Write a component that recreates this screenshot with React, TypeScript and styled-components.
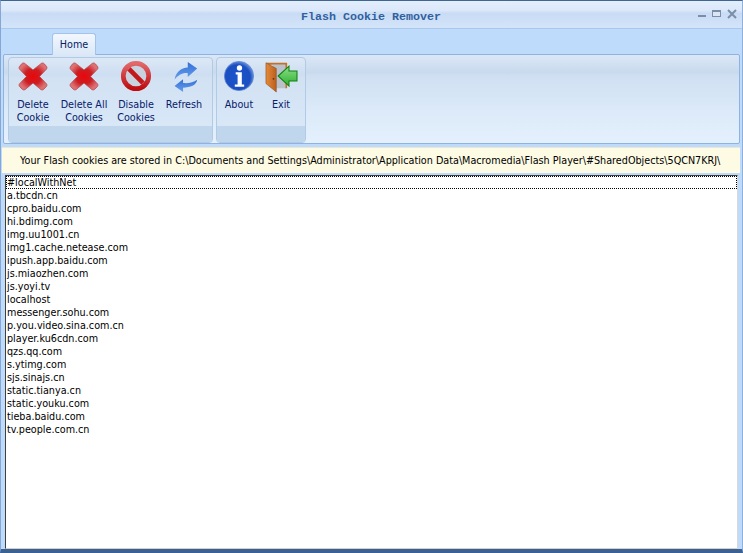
import * as React from 'react'
import styled, { createGlobalStyle } from 'styled-components'

const GlobalStyle = createGlobalStyle`
  html, body {
    margin: 0;
    padding: 0;
    background: #fff;
  }
`

const Window = styled.div`
  box-sizing: border-box;
  width: 743px;
  height: 553px;
  display: flex;
  flex-direction: column;
  background: #bfdbfb;
  border-top: 1px solid #3f6590;
  border-bottom: 4px solid #3b6092;
  border-left: 1px solid #86a6d6;
  border-right: 1px solid #8fb0d8;
  font-family: "DejaVu Sans", sans-serif;
  font-size: 9.65px;
  color: #000;
  overflow: hidden;
`

const TitleBar = styled.header`
  position: relative;
  flex: none;
  height: 27px;
  display: flex;
  align-items: center;
  justify-content: center;
  background: linear-gradient(#e3eefc 0, #dbe8fa 35%, #c9dcf5 45%, #d3e4f9 100%);
  border-bottom: 1px solid #a9c8ee;
`

const Title = styled.h1`
  margin: 0 0 0 -1px;
  padding-top: 5px;
  font-family: "Liberation Mono", monospace;
  font-size: 11.67px;
  font-weight: 700;
  color: #31609f;
`

const WindowControls = styled.div`
  position: absolute;
  top: 8px;
  right: 5px;
  display: flex;
  gap: 6px;
  svg {
    display: block;
  }
`

const TabStrip = styled.nav`
  flex: none;
  height: 25px;
  display: flex;
  align-items: flex-end;
  padding-left: 51px;
  background: #bfdbfb;
`

const Tab = styled.div`
  box-sizing: border-box;
  width: 44px;
  height: 22px;
  margin-bottom: -1px;
  display: flex;
  align-items: center;
  justify-content: center;
  position: relative;
  z-index: 1;
  color: #06206a;
  background: linear-gradient(#f2f7fe, #dbe8f7);
  border: 1px solid #a3c3ea;
  border-bottom: none;
  border-radius: 3px 3px 0 0;
`

const Ribbon = styled.section`
  box-sizing: border-box;
  flex: none;
  height: 90px;
  margin: 0 2px;
  padding: 2px 4px 0;
  display: flex;
  gap: 3px;
  background: linear-gradient(#dbe7f6 0, #c9daee 20%, #d0e0f2 24%, #dceaf9 65%, #e4f0fc 100%);
  border: 1px solid #8fb3e0;
  border-radius: 2px;
`

const Group = styled.div<{ $width: number }>`
  box-sizing: border-box;
  width: ${p => p.$width}px;
  display: flex;
  flex-direction: column;
  background: linear-gradient(#dce8f6, #cddef1 20%, #d2e2f3 24%, #dbe9f8);
  border: 1px solid #b2cae4;
  border-radius: 4px;
  overflow: hidden;
`

const GroupButtons = styled.div`
  flex: 1;
  display: flex;
`

const GroupFooter = styled.div`
  flex: none;
  height: 16px;
  background: #bfd6ec;
`

const RibbonButton = styled.button<{ $width: number }>`
  flex: none;
  width: ${p => p.$width}px;
  padding: 2px 0 0;
  display: flex;
  flex-direction: column;
  align-items: center;
  background: none;
  border: none;
  font: inherit;
  color: #06206a;
`

const IconSlot = styled.span`
  height: 36px;
  display: block;
  svg {
    display: block;
    overflow: visible;
  }
`

const ButtonLabel = styled.span`
  margin-top: 2px;
  line-height: 13px;
  text-align: center;
  white-space: pre;
`

const MessageBar = styled.div`
  flex: none;
  height: 25px;
  margin: 3px 2px 0 1px;
  padding-left: 18px;
  display: flex;
  align-items: center;
  background: #fdfbe3;
  border-top: 1px solid #e9e8d6;
  white-space: pre;
`

const CookieList = styled.ul`
  box-sizing: border-box;
  flex: none;
  height: 374px;
  margin: 2px 4px 0;
  padding: 0;
  list-style: none;
  background: #fff;
  border-top: 1px solid #404040;
  border-left: 1px solid #404040;
  border-right: 1px solid #d8d8d8;
  border-bottom: 1px solid #d4d0c8;
`

const CookieRow = styled.li<{ $focused?: boolean }>`
  box-sizing: border-box;
  height: 13px;
  padding-left: 1px;
  line-height: 13px;
  white-space: nowrap;
  outline: ${p => (p.$focused ? '1px dotted #000' : 'none')};
  outline-offset: -1px;
`

const cookies = [
  '#localWithNet',
  'a.tbcdn.cn',
  'cpro.baidu.com',
  'hi.bdimg.com',
  'img.uu1001.cn',
  'img1.cache.netease.com',
  'ipush.app.baidu.com',
  'js.miaozhen.com',
  'js.yoyi.tv',
  'localhost',
  'messenger.sohu.com',
  'p.you.video.sina.com.cn',
  'player.ku6cdn.com',
  'qzs.qq.com',
  's.ytimg.com',
  'sjs.sinajs.cn',
  'static.tianya.cn',
  'static.youku.com',
  'tieba.baidu.com',
  'tv.people.com.cn',
]

const CrossIcon = () => (
  <svg width="32" height="32" viewBox="0 0 34 34">
    <defs>
      <radialGradient id="crossFill" cx="50%" cy="50%" r="52%">
        <stop offset="0" stopColor="#ec0509" />
        <stop offset="0.55" stopColor="#cb1e23" />
        <stop offset="1" stopColor="#dc7073" />
      </radialGradient>
    </defs>
    <path
      d="M8 3.500 17 10.500 26 3.500C27 3 28 3 29 4L31.500 7C32 8 32 9 31.500 9.500L24 17.500 31.500 25.500C32 26.500 32 27.500 31 28.500L28.500 31C27.500 32 26.500 32 25.500 31.500L17 24.500 8.500 31.500C7.500 32 6.500 32 5.500 31L3 28.500C2 27.500 2 26.500 2.500 25.500L10 17.500 2.500 9.500C2 8.500 2 7.500 3 6.500L5 4C6 3 7 3 8 3.500Z"
      fill="url(#crossFill)"
      stroke="#b8484b"
      strokeWidth="0.8"
    />
  </svg>
)

const BanIcon = () => (
  <svg width="32" height="32" viewBox="0 0 34 34">
    <defs>
      <linearGradient id="banRing" x1="0" y1="0" x2="0" y2="1">
        <stop offset="0" stopColor="#e2686a" />
        <stop offset="1" stopColor="#bd0d10" />
      </linearGradient>
    </defs>
    <circle cx="17" cy="17" r="13.500" fill="#c7d3df" stroke="url(#banRing)" strokeWidth="5" />
    <path d="M9.500 9.500 24.500 24.500" stroke="#c4191c" strokeWidth="5" />
  </svg>
)

const RefreshIcon = () => (
  <svg width="32" height="32" viewBox="0 0 34 34">
    <defs>
      <linearGradient id="refreshFill" x1="0" y1="0" x2="0" y2="1">
        <stop offset="0" stopColor="#2f6fd8" />
        <stop offset="1" stopColor="#6aa0ea" />
      </linearGradient>
    </defs>
    <path
      d="M7 21C8 13 14 8.500 21 8L21 2 31 9 21 18 21 14C15 13.500 11 16 7 21Z"
      fill="url(#refreshFill)"
    />
    <path
      d="M31 21C30 27 24 29 16 29.500L16 34 7 27.500 16 20.500 16 24.500C22 25 27 24 31 21Z"
      fill="url(#refreshFill)"
    />
  </svg>
)

const InfoIcon = () => (
  <svg width="32" height="32" viewBox="0 0 34 34">
    <defs>
      <radialGradient id="infoFill" cx="45%" cy="55%" r="62%">
        <stop offset="0" stopColor="#1c55cf" />
        <stop offset="0.7" stopColor="#1b4fc0" />
        <stop offset="1" stopColor="#8fb0ea" />
      </radialGradient>
    </defs>
    <circle cx="17" cy="17" r="15.500" fill="url(#infoFill)" stroke="#5b86d2" strokeWidth="0.8" />
    <circle cx="17.500" cy="8.500" r="2.800" fill="#fff" />
    <path d="M13.500 13H20V26H22.500V28.500H12.500V26H15.500V15.500H13.500Z" fill="#fff" />
  </svg>
)

const ExitIcon = () => (
  <svg width="32" height="32" viewBox="0 0 34 34">
    <defs>
      <linearGradient id="doorFill" x1="0" y1="0" x2="1" y2="0">
        <stop offset="0" stopColor="#e58a3a" />
        <stop offset="1" stopColor="#b9601f" />
      </linearGradient>
      <linearGradient id="arrowFill" x1="0" y1="0" x2="0" y2="1">
        <stop offset="0" stopColor="#8be08a" />
        <stop offset="1" stopColor="#2faf2f" />
      </linearGradient>
    </defs>
    <path d="M1 3H23.500V30H21.500V5H4Z" fill="#c4702b" />
    <path d="M8 5H21.500V30H8Z" fill="#b9c2cc" />
    <path d="M1 3L12 9V34L1 25Z" fill="url(#doorFill)" stroke="#8d4a18" strokeWidth="0.6" />
    <circle cx="9" cy="20" r="0.900" fill="#5b3010" />
    <path
      d="M14 17 25.500 6.500V11.700H34V22.300H25.500V27.700Z"
      fill="url(#arrowFill)"
      stroke="#0f800f"
      strokeWidth="1.100"
    />
  </svg>
)

const MinimizeGlyph = () => (
  <svg width="8" height="10" viewBox="0 0 8 10">
    <rect x="0" y="6" width="8" height="2" fill="#7a8ea8" />
  </svg>
)

const MaximizeGlyph = () => (
  <svg width="9" height="10" viewBox="0 0 9 10">
    <rect x="0.500" y="1.500" width="8" height="6" fill="#dbe6f4" stroke="#7a8ea8" />
    <rect x="0" y="1" width="9" height="2" fill="#7a8ea8" />
  </svg>
)

const CloseGlyph = () => (
  <svg width="10" height="10" viewBox="0 0 10 10">
    <path d="M1 1 9 9M9 1 1 9" stroke="#7a8ea8" strokeWidth="2" />
  </svg>
)

const groups = [
  {
    width: 205,
    buttons: [
      { label: 'Delete\nCookie', width: 48, icon: <CrossIcon /> },
      { label: 'Delete All\nCookies', width: 54, icon: <CrossIcon /> },
      { label: 'Disable\nCookies', width: 50, icon: <BanIcon /> },
      { label: 'Refresh', width: 46, icon: <RefreshIcon /> },
    ],
  },
  {
    width: 90,
    buttons: [
      { label: 'About', width: 44, icon: <InfoIcon /> },
      { label: 'Exit', width: 40, icon: <ExitIcon /> },
    ],
  },
]

export default function App() {
  return (
    <>
      <GlobalStyle />
      <Window>
        <TitleBar>
          <Title>Flash Cookie Remover</Title>
          <WindowControls>
            <MinimizeGlyph />
            <MaximizeGlyph />
            <CloseGlyph />
          </WindowControls>
        </TitleBar>
        <TabStrip>
          <Tab>Home</Tab>
        </TabStrip>
        <Ribbon>
          {groups.map(group => (
            <Group key={group.buttons[0].label} $width={group.width}>
              <GroupButtons>
                {group.buttons.map(button => (
                  <RibbonButton key={button.label} $width={button.width}>
                    <IconSlot>{button.icon}</IconSlot>
                    <ButtonLabel>{button.label}</ButtonLabel>
                  </RibbonButton>
                ))}
              </GroupButtons>
              <GroupFooter />
            </Group>
          ))}
        </Ribbon>
        <MessageBar>
          Your Flash cookies are stored in C:\Documents and Settings\Administrator\Application Data\Macromedia\Flash Player\#SharedObjects\5QCN7KRJ\
        </MessageBar>
        <CookieList>
          {cookies.map((host, index) => (
            <CookieRow key={host} $focused={index === 0}>
              {host}
            </CookieRow>
          ))}
        </CookieList>
      </Window>
    </>
  )
}
